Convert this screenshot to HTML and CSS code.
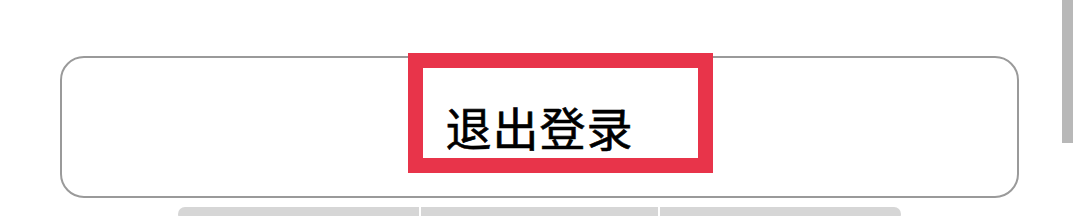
FILE: index.html
```html
<!DOCTYPE html>
<html lang="zh-CN">
<head>
  <meta charset="UTF-8" />
  <meta name="viewport" content="width=device-width, initial-scale=1.0"/>
  <title>退出登录</title>
  <link rel="stylesheet" href="styles.css">
</head>
<body>
  <div class="page">
    <div class="logout-btn">
      <span class="logout-text">退出登录</span>
      <div class="highlight"></div>
    </div>
    <div class="tabs">
      <div class="tab tab-first"></div>
      <div class="tab tab-mid"></div>
      <div class="tab tab-last"></div>
    </div>
  </div>
  <div class="scroll-thumb"></div>
</body>
</html>
```

FILE: styles.css
```css
body {
  margin: 0;
  background: #fff;
  font-family: "Noto Sans CJK SC", "Noto Sans", sans-serif;
  overflow: hidden;
  height: 216px;
}

.page {
  padding-top: 56px;
}

.logout-btn {
  position: relative;
  box-sizing: border-box;
  margin-left: 60px;
  width: 959px;
  height: 142px;
  border: 2px solid #9a9a9a;
  border-radius: 24px;
  display: flex;
  justify-content: center;
  align-items: center;
}

.logout-text {
  font-size: 46px;
  font-weight: 400;
  color: #000;
  letter-spacing: 1px;
  padding-bottom: 2px;
  -webkit-text-stroke: 0.6px #000;
}

.highlight {
  position: absolute;
  left: 346px;
  top: -5px;
  width: 305px;
  height: 120px;
  box-sizing: border-box;
  border: 15px solid #e8344a;
}

.tabs {
  display: flex;
  gap: 2px;
  margin-top: 9px;
  margin-left: 178px;
}

.tab {
  height: 14px;
  background: #d6d6d6;
}

.tab-first { width: 241px; border-radius: 7px 0 0 7px; }
.tab-mid { width: 237px; }
.tab-last { width: 241px; border-radius: 0 7px 7px 0; }

.scroll-thumb {
  position: absolute;
  top: 0;
  right: 7px;
  width: 11px;
  height: 143px;
  background: #b8b8b8;
}
```
